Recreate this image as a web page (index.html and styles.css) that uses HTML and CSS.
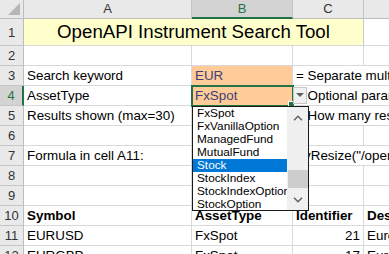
FILE: index.html
```html
<!DOCTYPE html>
<html lang="en">
  <head>
    <meta charset="UTF-8" />
    <title>OpenAPI Instrument Search Tool</title>
    <link rel="stylesheet" href="styles.css">
  </head>
  <body>
    <div class="sheet">
      <!-- column headers -->
      <div class="corner"><span class="tri"></span></div>
      <div class="colhead">A</div>
      <div class="colhead valgt">B</div>
      <div class="colhead">C</div>
      <div class="colhead"></div>

      <!-- row 1 -->
      <div class="rowhead tall">1</div>
      <div class="cell title">OpenAPI Instrument Search Tool</div>
      <div class="cell"></div>

      <!-- row 2 -->
      <div class="rowhead">2</div>
      <div class="cell"></div><div class="cell"></div><div class="cell"></div><div class="cell"></div>

      <!-- row 3 -->
      <div class="rowhead">3</div>
      <div class="cell">Search keyword</div>
      <div class="cell input">EUR</div>
      <div class="cell wide">= Separate multiple keywords with a space</div>

      <!-- row 4 -->
      <div class="rowhead valgt">4</div>
      <div class="cell">AssetType</div>
      <div class="cell input aktiv">FxSpot<span class="handle"></span></div>
      <div class="cell wide">= Optional parameter, select from the list</div>

      <!-- row 5 -->
      <div class="rowhead">5</div>
      <div class="cell">Results shown (max=30)</div>
      <div class="cell"></div>
      <div class="cell wide">= How many results to show</div>

      <!-- row 6 -->
      <div class="rowhead">6</div>
      <div class="cell"></div><div class="cell"></div><div class="cell"></div><div class="cell"></div>

      <!-- row 7 -->
      <div class="rowhead">7</div>
      <div class="cell">Formula in cell A11:</div>
      <div class="cell formel">=OpenAPIGetArrayResize("/openapi/ref/v1/instruments/?Keywords="&amp;B3)</div>

      <!-- row 8 -->
      <div class="rowhead">8</div>
      <div class="cell"></div><div class="cell"></div><div class="cell"></div><div class="cell"></div>

      <!-- row 9 -->
      <div class="rowhead">9</div>
      <div class="cell"></div><div class="cell"></div><div class="cell"></div><div class="cell"></div>

      <!-- row 10 -->
      <div class="rowhead">10</div>
      <div class="cell bold">Symbol</div>
      <div class="cell bold">AssetType</div>
      <div class="cell bold">Identifier</div>
      <div class="cell bold">Description</div>

      <!-- row 11 -->
      <div class="rowhead">11</div>
      <div class="cell">EURUSD</div>
      <div class="cell">FxSpot</div>
      <div class="cell num">21</div>
      <div class="cell">Euro/US Dollar</div>

      <!-- row 12 -->
      <div class="rowhead">12</div>
      <div class="cell">EURGBP</div>
      <div class="cell">FxSpot</div>
      <div class="cell num">17</div>
      <div class="cell">Euro/British Pound</div>
    </div>

    <!-- validation dropdown for B4 -->
    <div class="dropknap">
      <svg width="8" height="5" viewBox="0 0 8 5"><path d="M0 0 L8 0 L4 4 Z" fill="#5f5f5f" /></svg>
    </div>
    <div class="liste">
      <ul>
        <li>FxSpot</li>
        <li>FxVanillaOption</li>
        <li>ManagedFund</li>
        <li>MutualFund</li>
        <li class="markeret">Stock</li>
        <li>StockIndex</li>
        <li>StockIndexOption</li>
        <li>StockOption</li>
      </ul>
      <div class="scroll">
        <div class="pil">
          <svg width="10" height="6" viewBox="0 0 10 6"><path d="M1 5.2 L5 1.2 L9 5.2" fill="none" stroke="#606060" stroke-width="1.4" /></svg>
        </div>
        <div class="spor"><div class="greb"></div></div>
        <div class="pil">
          <svg width="10" height="6" viewBox="0 0 10 6"><path d="M1 0.8 L5 4.8 L9 0.8" fill="none" stroke="#606060" stroke-width="1.4" /></svg>
        </div>
      </div>
    </div>
  </body>
</html>
```

FILE: styles.css
```css
body {
  margin: 0;
  overflow: hidden;
  background-color: white;
  font-family: "Liberation Sans", Arial, sans-serif;
  width: 389px;
  height: 254px;
  position: relative;
}
.sheet {
  display: grid;
  grid-template-columns: 24px 168px 101px 71px 60px;
  grid-template-rows: 19px 27px repeat(10, 20px);
}
.sheet > div {
  box-sizing: border-box;
  white-space: nowrap;
}
.corner {
  background-color: #e9e9e9;
  border-right: 1px solid #bdbdbd;
  border-bottom: 1px solid #bdbdbd;
  position: relative;
}
.corner .tri {
  position: absolute;
  right: 3px;
  bottom: 3px;
  width: 0;
  height: 0;
  border-left: 12px solid transparent;
  border-bottom: 12px solid #b6b6b6;
}
.colhead {
  background-color: #e9e9e9;
  border-right: 1px solid #c6c6c6;
  border-bottom: 1px solid #bdbdbd;
  text-align: center;
  font-size: 13px;
  line-height: 18px;
  color: #333;
}
.colhead.valgt {
  background-color: #d3d3d3;
  color: #217346;
  border-bottom: 2px solid #217346;
}
.rowhead {
  background-color: #e9e9e9;
  border-right: 1px solid #bdbdbd;
  border-bottom: 1px solid #c6c6c6;
  text-align: center;
  font-size: 13px;
  line-height: 20px;
  color: #333;
}
.rowhead.tall {
  line-height: 27px;
}
.rowhead.valgt {
  background-color: #d3d3d3;
  color: #217346;
  border-right: 2px solid #217346;
}
.cell {
  border-right: 1px solid #d9d9d9;
  border-bottom: 1px solid #d9d9d9;
  font-size: 13.4px;
  line-height: 20px;
  padding-left: 3px;
  color: #000;
  position: relative;
}
.title {
  grid-column: span 3;
  background-color: #ffffcc;
  text-align: center;
  font-size: 18.7px;
  line-height: 26px;
  padding-left: 0;
  border-right-color: #c8c8c8;
}
.wide {
  grid-column: span 2;
}
.formel {
  grid-column: span 3;
}
.input {
  background-color: #ffcc99;
  color: #3f3f76;
}
.aktiv {
  outline: 2px solid #217346;
  outline-offset: -1px;
  z-index: 1;
}
.aktiv .handle {
  position: absolute;
  right: -3px;
  bottom: -3px;
  width: 5px;
  height: 5px;
  background-color: #217346;
  border: 1px solid white;
}
.bold {
  font-weight: bold;
}
.num {
  text-align: right;
  padding-right: 3px;
}

/* dropdown */
.dropknap {
  position: absolute;
  left: 293px;
  top: 87px;
  width: 14px;
  height: 17px;
  box-sizing: border-box;
  background-color: #f0f0f0;
  border: 1px solid #c6c6c6;
  display: flex;
  align-items: center;
  justify-content: center;
  z-index: 2;
}
.liste {
  position: absolute;
  left: 192px;
  top: 106px;
  width: 117px;
  height: 105px;
  box-sizing: border-box;
  border: 1px solid #1a1a1a;
  background-color: white;
  display: flex;
  z-index: 3;
}
.liste ul {
  list-style: none;
  margin: 0;
  padding: 0;
  width: 94px;
  overflow: hidden;
}
.liste li {
  height: 13px;
  line-height: 13px;
  font-size: 11.8px;
  padding-left: 4px;
  white-space: nowrap;
  overflow: hidden;
}
.liste li.markeret {
  background-color: #0078d7;
  color: white;
}
.scroll {
  width: 21px;
  background-color: #f0f0f0;
  display: flex;
  flex-direction: column;
}
.pil {
  height: 21px;
  display: flex;
  align-items: center;
  justify-content: center;
}
.spor {
  flex: 1;
  padding-top: 42px;
}
.greb {
  height: 18px;
  margin-left: 1px;
  background-color: #cdcdcd;
}
```
